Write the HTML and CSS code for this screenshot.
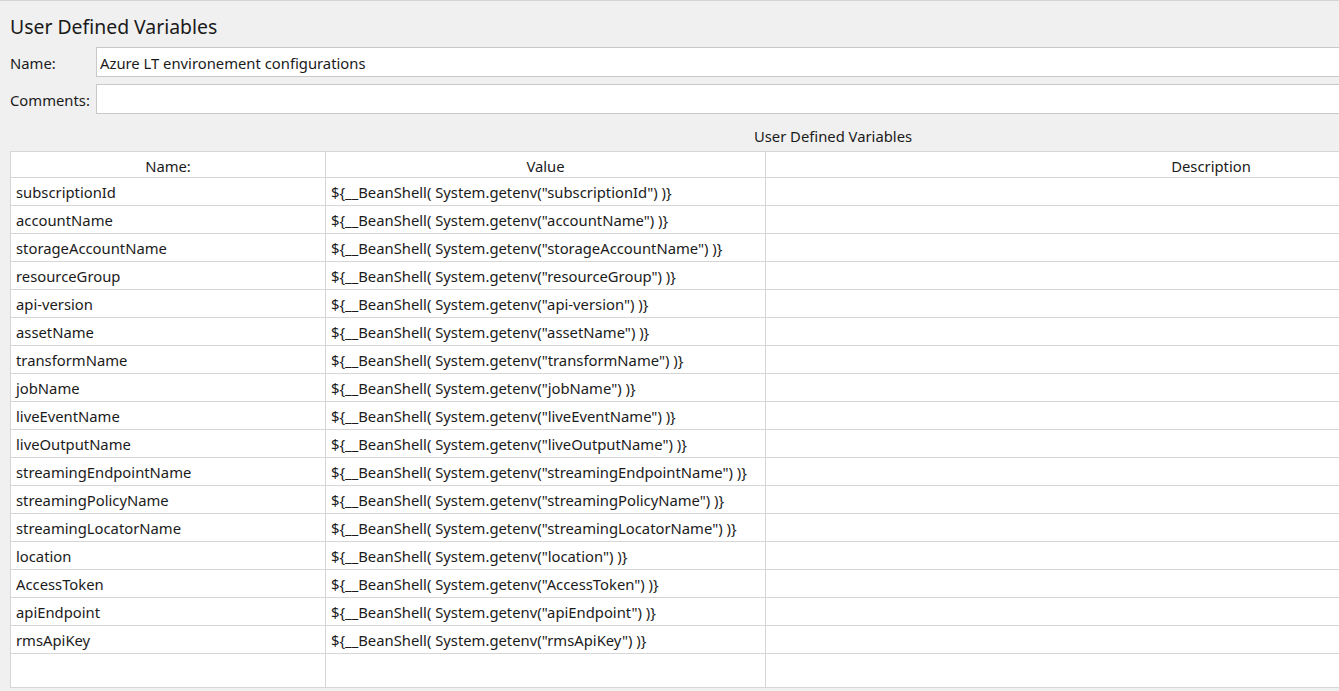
FILE: index.html
```html
<!DOCTYPE html>
<html>
<head>
<meta charset="utf-8">
<link rel="stylesheet" href="styles.css">
</head>
<body>
<div class="panel">
  <h1 class="title">User Defined Variables</h1>
  <div class="field">
    <label class="label">Name:</label>
    <div class="input">Azure LT environement configurations</div>
  </div>
  <div class="field">
    <label class="label">Comments:</label>
    <div class="input"></div>
  </div>
  <div class="caption">User Defined Variables</div>
  <div class="table">
    <div class="row head">
      <div class="cell c1">Name:</div>
      <div class="cell c2">Value</div>
      <div class="cell c3">Description</div>
    </div>
    <div class="row"><div class="cell c1">subscriptionId</div><div class="cell c2">${__BeanShell( System.getenv("subscriptionId") )}</div><div class="cell c3"></div></div>
    <div class="row"><div class="cell c1">accountName</div><div class="cell c2">${__BeanShell( System.getenv("accountName") )}</div><div class="cell c3"></div></div>
    <div class="row"><div class="cell c1">storageAccountName</div><div class="cell c2">${__BeanShell( System.getenv("storageAccountName") )}</div><div class="cell c3"></div></div>
    <div class="row"><div class="cell c1">resourceGroup</div><div class="cell c2">${__BeanShell( System.getenv("resourceGroup") )}</div><div class="cell c3"></div></div>
    <div class="row"><div class="cell c1">api-version</div><div class="cell c2">${__BeanShell( System.getenv("api-version") )}</div><div class="cell c3"></div></div>
    <div class="row"><div class="cell c1">assetName</div><div class="cell c2">${__BeanShell( System.getenv("assetName") )}</div><div class="cell c3"></div></div>
    <div class="row"><div class="cell c1">transformName</div><div class="cell c2">${__BeanShell( System.getenv("transformName") )}</div><div class="cell c3"></div></div>
    <div class="row"><div class="cell c1">jobName</div><div class="cell c2">${__BeanShell( System.getenv("jobName") )}</div><div class="cell c3"></div></div>
    <div class="row"><div class="cell c1">liveEventName</div><div class="cell c2">${__BeanShell( System.getenv("liveEventName") )}</div><div class="cell c3"></div></div>
    <div class="row"><div class="cell c1">liveOutputName</div><div class="cell c2">${__BeanShell( System.getenv("liveOutputName") )}</div><div class="cell c3"></div></div>
    <div class="row"><div class="cell c1">streamingEndpointName</div><div class="cell c2">${__BeanShell( System.getenv("streamingEndpointName") )}</div><div class="cell c3"></div></div>
    <div class="row"><div class="cell c1">streamingPolicyName</div><div class="cell c2">${__BeanShell( System.getenv("streamingPolicyName") )}</div><div class="cell c3"></div></div>
    <div class="row"><div class="cell c1">streamingLocatorName</div><div class="cell c2">${__BeanShell( System.getenv("streamingLocatorName") )}</div><div class="cell c3"></div></div>
    <div class="row"><div class="cell c1">location</div><div class="cell c2">${__BeanShell( System.getenv("location") )}</div><div class="cell c3"></div></div>
    <div class="row"><div class="cell c1">AccessToken</div><div class="cell c2">${__BeanShell( System.getenv("AccessToken") )}</div><div class="cell c3"></div></div>
    <div class="row"><div class="cell c1">apiEndpoint</div><div class="cell c2">${__BeanShell( System.getenv("apiEndpoint") )}</div><div class="cell c3"></div></div>
    <div class="row"><div class="cell c1">rmsApiKey</div><div class="cell c2">${__BeanShell( System.getenv("rmsApiKey") )}</div><div class="cell c3"></div></div>
    <div class="row filler"><div class="cell c1"></div><div class="cell c2"></div><div class="cell c3"></div></div>
  </div>
</div>
</body>
</html>
```

FILE: styles.css
```css
html, body {
  margin: 0;
  padding: 0;
  background: #f0f0f0;
  overflow: hidden;
  height: 691px;
}
body {
  font-family: "Noto Sans", "Open Sans", sans-serif;
  color: #1b1b1b;
  font-size: 14.8px;
  border-top: 1px solid #d4d4d4;
  box-sizing: border-box;
}
.panel {
  width: 1646px;
  padding-left: 10px;
}
.title {
  margin: 0;
  height: 38px;
  padding-top: 13px;
  box-sizing: border-box;
  font-size: 19.4px;
  font-weight: normal;
  line-height: 26px;
  color: #1a1a1a;
}
.field {
  display: flex;
  align-items: center;
  margin-top: 8px;
}
.field + .field {
  margin-top: 7px;
}
.label {
  width: 86px;
  flex: none;
  padding-top: 2px;
}
.input {
  flex: 1;
  height: 30px;
  box-sizing: border-box;
  background: #fff;
  border: 1px solid #c9c9c9;
  padding-left: 3px;
  line-height: 30px;
}
.caption {
  text-align: center;
  height: 37px;
  line-height: 22px;
  padding-top: 11px;
  box-sizing: border-box;
}
.table {
  background: #fff;
  border: 1px solid #d6d6d6;
  border-right: none;
}
.row {
  display: flex;
  height: 28px;
  border-bottom: 1px solid #d6d6d6;
  box-sizing: border-box;
}
.row.head {
  height: 26px;
}
.row.head .cell {
  text-align: center;
  line-height: 28px;
  padding-left: 0;
}
.row.filler {
  height: 33px;
  border-bottom: none;
}
.cell {
  line-height: 29px;
  padding-left: 5px;
  box-sizing: border-box;
  white-space: nowrap;
  overflow: hidden;
}
.c1 {
  width: 315px;
  border-right: 1px solid #d6d6d6;
}
.c2 {
  width: 440px;
  border-right: 1px solid #d6d6d6;
}
.c3 {
  flex: 1;
}
```
